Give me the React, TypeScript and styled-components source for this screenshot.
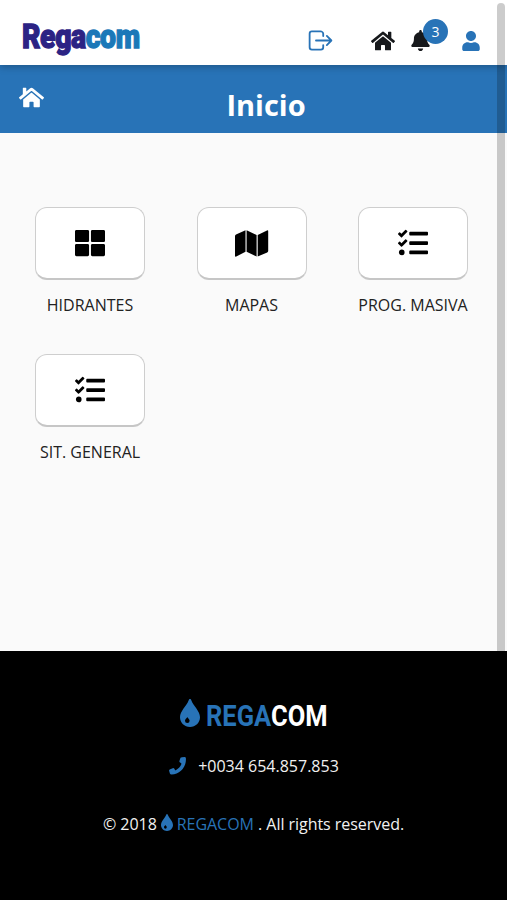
import React from 'react';
import styled, { createGlobalStyle } from 'styled-components';
import { FaBell, FaHome, FaTasks, FaThLarge, FaUser } from 'react-icons/fa';
import { IoLogOutOutline } from 'react-icons/io5';

const GlobalStyle = createGlobalStyle`
  * { box-sizing: border-box; }
  body { margin: 0; background: #fafafa; font-family: 'Open Sans', 'Noto Sans', sans-serif; color: #222; overflow: hidden; }
  svg { display: block; flex: none; }
`;

const Page = styled.div`
  position: relative;
  height: 900px;
  display: flex;
  flex-direction: column;
`;

const TopBar = styled.header`
  height: 65px;
  flex: none;
  background: #fff;
  display: flex;
  align-items: flex-start;
  padding: 0 26px 0 22px;
  z-index: 1;
  box-shadow: 0 2px 7px rgba(0, 0, 0, 0.25);
`;

const Logo = styled.div`
  width: 120px;
  height: 52px;
  margin-top: 10px;
  white-space: nowrap;
  font: 900 34px/52px Roboto, sans-serif;
  letter-spacing: -0.5px;
  color: #2c2384;
  transform: scaleX(0.835);
  transform-origin: left;
  -webkit-text-stroke: 1.3px currentColor;
  span { color: #1b78b8; }
`;

const Tools = styled.nav`
  flex: 1;
  display: flex;
  justify-content: flex-end;
  align-items: center;
  padding-top: 25px;
  height: 56px;
`;

const Tool = styled.div<{ $gap?: number; $tone?: string }>`
  position: relative;
  margin-left: ${(p) => p.$gap ?? 0}px;
  color: ${(p) => p.$tone ?? '#17191c'};
`;

const Badge = styled.span`
  position: absolute;
  left: 13px;
  top: -11px;
  width: 25px;
  height: 25px;
  border-radius: 50%;
  background: #2873b7;
  color: #fff;
  font-size: 14px;
  line-height: 26px;
  text-align: center;
`;

const TitleBar = styled.div`
  height: 68px;
  flex: none;
  background: #2873b7;
  color: #fff;
  display: grid;
  grid-template-columns: 50px 1fr 44px;
  padding: 0 0 0 19px;
`;

const HomeLink = styled.div`
  padding-top: 20px;
  svg { transform: scaleX(-1); }
`;

const Title = styled.h1`
  margin: 0;
  font-size: 29px;
  line-height: 79px;
  text-align: center;
`;

const Content = styled.main`
  flex: 1;
  padding: 74px 39px 0 35px;
  display: grid;
  grid-template-columns: repeat(3, 110px);
  grid-auto-rows: 146.5px;
  align-content: start;
  justify-content: space-between;
`;

const Tile = styled.div`
  display: flex;
  flex-direction: column;
  align-items: center;
`;

const TileButton = styled.div`
  width: 110px;
  height: 73px;
  border: 1.5px solid #cecece;
  border-bottom: 2px solid #c6c6c6;
  border-radius: 12px;
  background: #fff;
  color: #000;
  display: flex;
  align-items: center;
  justify-content: center;
`;

const TileLabel = styled.div`
  margin-top: 13px;
  font-size: 16px;
  line-height: 24px;
  white-space: nowrap;
`;

const Footer = styled.footer`
  height: 249px;
  flex: none;
  background: #000;
  color: #f1f1f1;
  display: flex;
  flex-direction: column;
  align-items: center;
  padding-top: 47px;
`;

const Brand = styled.div`
  display: flex;
  align-items: center;
  width: 148px;
  height: 36px;
  gap: 6px;
  color: #2873b7;
  svg { margin-top: -6px; }
`;

const BrandName = styled.div`
  font: 700 30px/36px Roboto, sans-serif;
  white-space: nowrap;
  transform: scaleX(0.85);
  transform-origin: left;
  span { color: #fff; }
`;

const Phone = styled.div`
  display: flex;
  align-items: center;
  gap: 12px;
  height: 24px;
  margin: 20px 0 0 1px;
  font-size: 16px;
  svg { color: #2873b7; }
`;

const Copyright = styled.div`
  display: flex;
  align-items: center;
  height: 24px;
  margin-top: 34px;
  font-size: 16px;
  letter-spacing: -0.04px;
  white-space: pre;
  svg { color: #2873b7; margin: -3px 4px 0 4px; }
  span { color: #2873b7; }
`;

const ScrollThumb = styled.div`
  position: absolute;
  z-index: 2;
  left: 497px;
  top: 3px;
  width: 8px;
  height: 648px;
  border-radius: 4px 4px 0 0;
  background: rgba(0, 0, 0, 0.2);
`;

const Drop = ({ width, height }: { width: number; height: number }) => (
  <svg width={width} height={height} viewBox="0 0 20 28" fill="currentColor" preserveAspectRatio="none">
    <path fillRule="evenodd" d="M10 0C10.7 0 11 .5 11.3 1.2C13.4 7.2 20 11.8 20 18.3C20 23.8 15.5 28 10 28S0 23.8 0 18.3C0 11.8 6.6 7.2 8.7 1.2C9 .5 9.3 0 10 0ZM7.3 18C6.7 19.3 5 20 5 21.8A2.3 2.3 0 0 0 9.6 21.8C9.6 20 7.9 19.3 7.3 18Z" />
  </svg>
);

const FoldedMap = () => (
  <svg width="34" height="27" viewBox="0 0 34 27" fill="currentColor">
    <path d="M0 6Q0 5 1 4.5L10.5 .3V21.8L1.3 26.5Q0 27 0 25.8ZM11.6 .3L21.6 5V26.5L11.6 21.8ZM22.7 5L32 .5Q33.2 0 33.2 1.3V21Q33.2 22 32.2 22.4L22.7 26.5Z" />
  </svg>
);

const Handset = () => (
  <svg width="17" height="18" viewBox="0 0 17 18" fill="currentColor">
    <path d="M11.5 .8Q12 .2 13 .2L15.7 0Q16.7 .1 16.9 1.2C17.6 9.8 11.2 17.2 2.5 17.5Q1.2 17.5 .9 16.5L.1 13.7Q0 13 .7 12.6L3.7 11.2Q4.6 10.9 5.2 11.6L6 12.9Q6.4 13.4 7.1 12.9C9.5 11.6 11.4 9.8 12.3 7.3Q12.6 6.6 12.1 6.2L10.8 5.3Q10.2 4.8 10.4 4Z" />
  </svg>
);

const tiles = [
  { label: 'HIDRANTES', icon: <FaThLarge size={30} /> },
  { label: 'MAPAS', icon: <FoldedMap /> },
  { label: 'PROG. MASIVA', icon: <FaTasks size={30} /> },
  { label: 'SIT. GENERAL', icon: <FaTasks size={30} /> },
];

export default function App() {
  return (
    <>
      <GlobalStyle />
      <Page>
        <TopBar>
          <Logo>Rega<span>com</span></Logo>
          <Tools>
            <Tool $tone="#2873b7"><IoLogOutOutline size={29} /></Tool>
            <Tool $gap={36}><FaHome size={24} /></Tool>
            <Tool $gap={15}><FaBell size={21} /><Badge>3</Badge></Tool>
            <Tool $gap={30} $tone="#2873b7"><FaUser size={20} /></Tool>
          </Tools>
        </TopBar>
        <TitleBar>
          <HomeLink><FaHome size={25} /></HomeLink>
          <Title>Inicio</Title>
        </TitleBar>
        <Content>
          {tiles.map((t) => (
            <Tile key={t.label}>
              <TileButton>{t.icon}</TileButton>
              <TileLabel>{t.label}</TileLabel>
            </Tile>
          ))}
        </Content>
        <Footer>
          <Brand><Drop width={20} height={28} /><BrandName>REGA<span>COM</span></BrandName></Brand>
          <Phone><Handset />+0034 654.857.853</Phone>
          <Copyright>© 2018<Drop width={12} height={17} /><span>REGACOM</span> . All rights reserved.</Copyright>
        </Footer>
        <ScrollThumb />
      </Page>
    </>
  );
}
